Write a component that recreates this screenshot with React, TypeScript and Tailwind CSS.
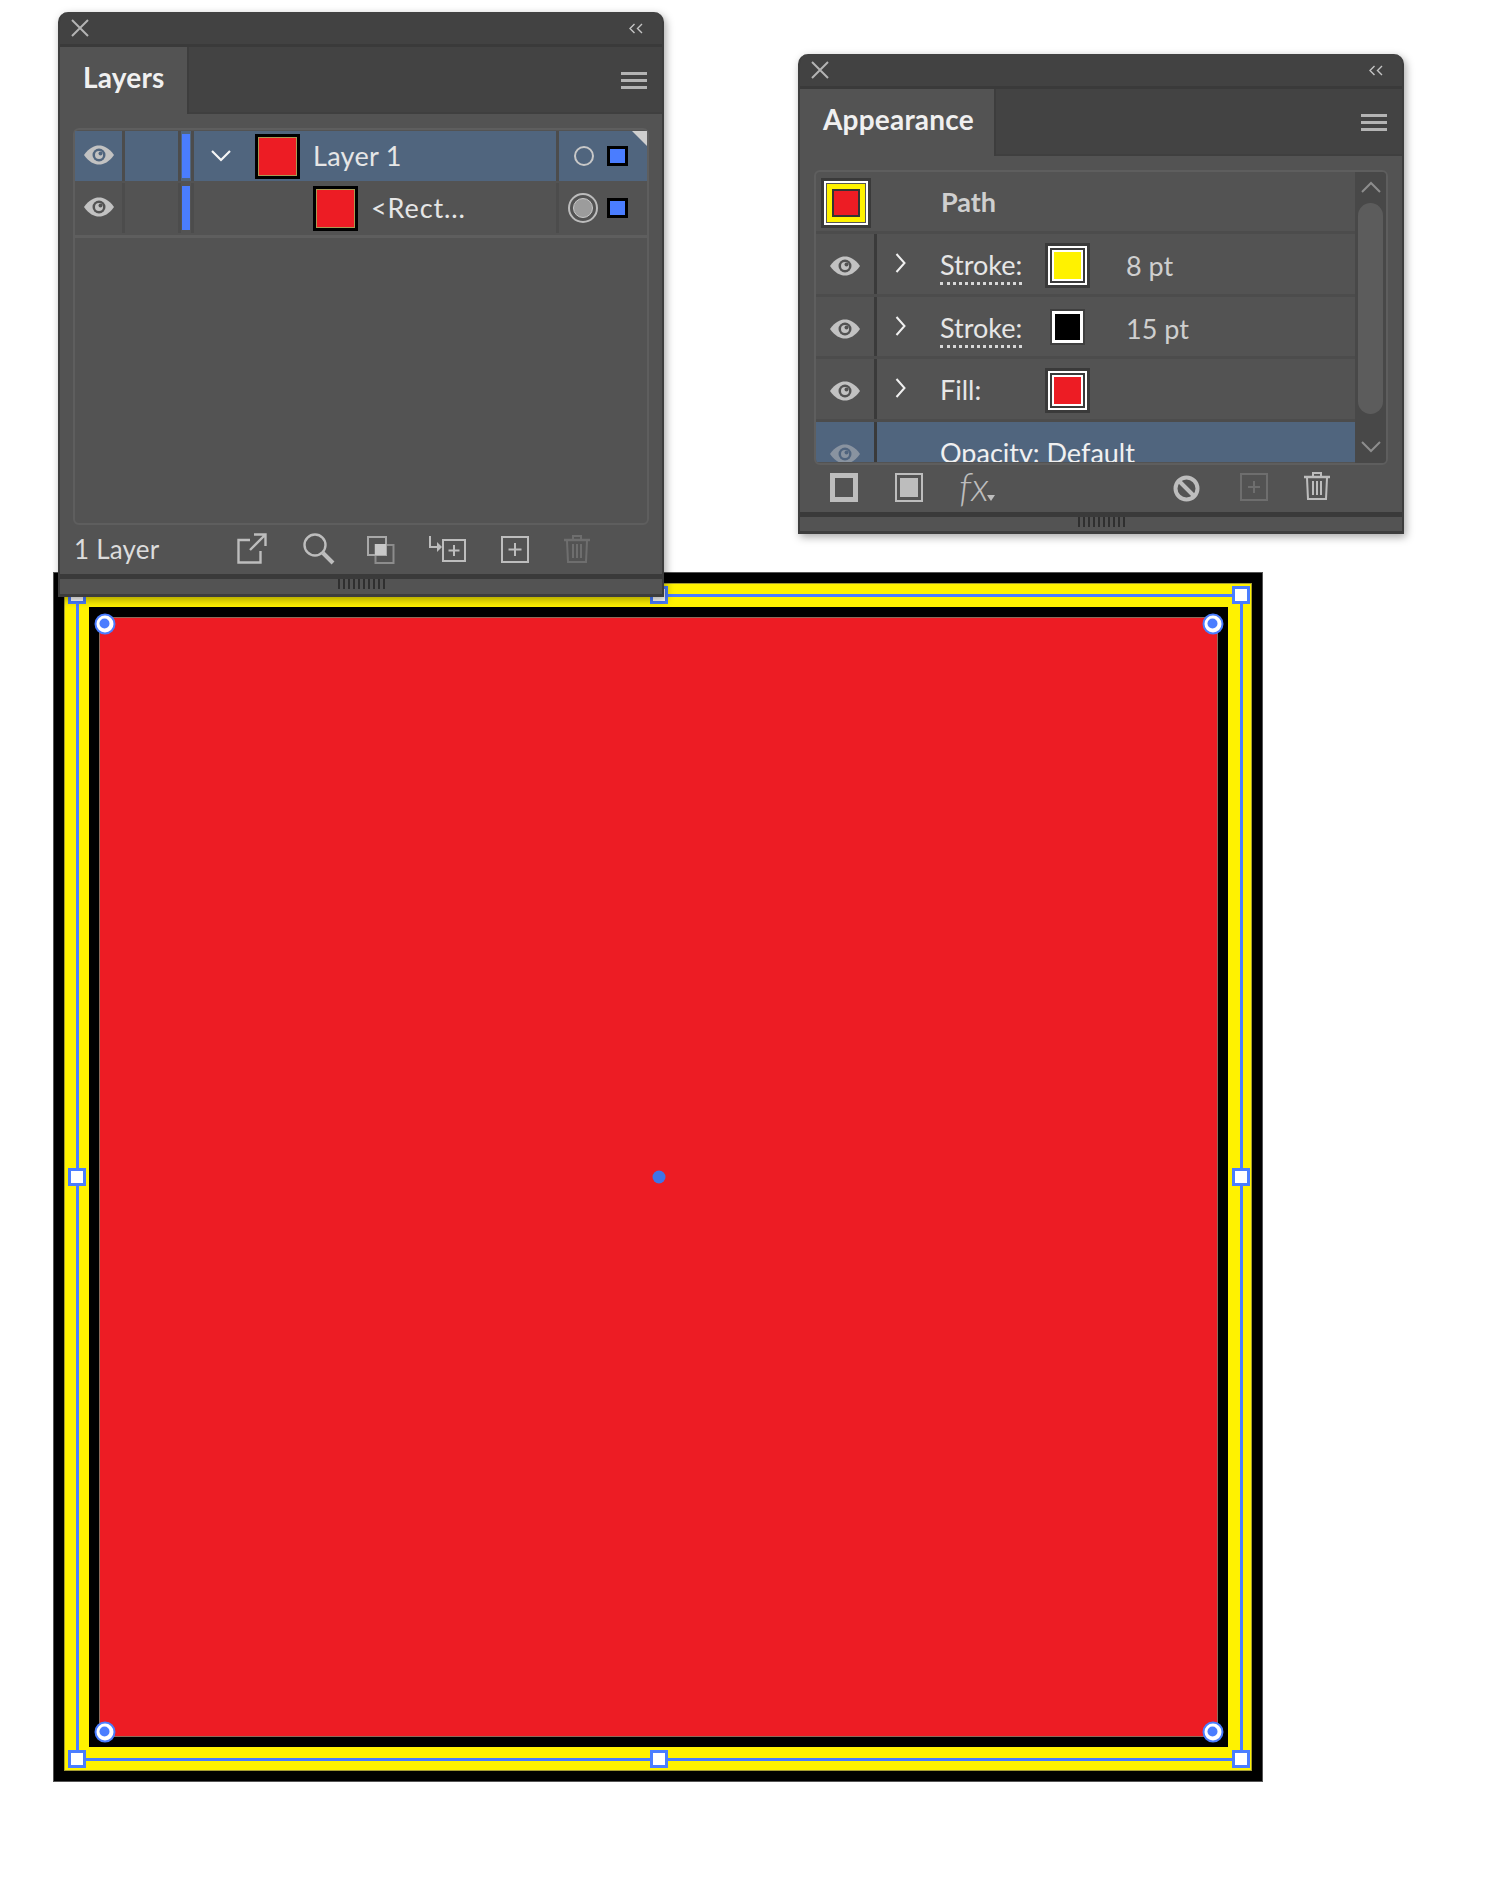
import type { ReactNode } from 'react';

const ICON = '#bdbdbd';

function CloseIcon() {
  return (
    <svg width="18" height="18" viewBox="0 0 18 18" fill="none" stroke="#b4b4b4" strokeWidth="2">
      <path d="M1 1 17 17M17 1 1 17" />
    </svg>
  );
}

function CollapseIcon() {
  return (
    <svg width="14" height="11" viewBox="0 0 14 11" fill="none" stroke="#c4c4c4" strokeWidth="1.4">
      <path d="M5.5 1 1 5.5 5.5 10M13 1 8.5 5.5 13 10" />
    </svg>
  );
}

function MenuIcon() {
  return (
    <div className="flex flex-col gap-[4px] w-[26px]">
      <div className="h-[3px] bg-[#b4b4b4]" />
      <div className="h-[3px] bg-[#b4b4b4]" />
      <div className="h-[3px] bg-[#b4b4b4]" />
    </div>
  );
}

function EyeIcon({ color = '#c2c2c2', pupil = '#535353' }: { color?: string; pupil?: string }) {
  return (
    <svg width="30" height="20" viewBox="0 0 30 20">
      <path d="M0 10C5 3 10 .5 15 .5S25 3 30 10C25 17 20 19.500 15 19.500S5 17 0 10Z" fill={color} />
      <circle cx="15" cy="10" r="6.500" fill={pupil} />
      <circle cx="15" cy="10" r="4" fill={color} />
      <circle cx="16.500" cy="8.500" r="2" fill={pupil} />
    </svg>
  );
}

function Chevron({ dir }: { dir: 'down' | 'right' | 'up' | 'downThin' }) {
  if (dir === 'right') {
    return (
      <svg width="11" height="20" viewBox="0 0 11 20" fill="none" stroke="#f0f0f0" strokeWidth="2">
        <path d="M1.500 1 9.500 10 1.500 19" />
      </svg>
    );
  }
  if (dir === 'down') {
    return (
      <svg width="20" height="12" viewBox="0 0 20 12" fill="none" stroke="#f5f5f5" strokeWidth="2.200">
        <path d="M1 1 10 10 19 1" />
      </svg>
    );
  }
  return (
    <svg width="20" height="12" viewBox="0 0 20 12" fill="none" stroke="#8d8d8d" strokeWidth="2">
      <path d={dir === 'up' ? 'M1 11 10 2 19 11' : 'M1 1 10 10 19 1'} />
    </svg>
  );
}

function Grip() {
  return (
    <div className="flex gap-[3px] h-[10px]">
      {Array.from({ length: 10 }).map((_, i) => (
        <div key={i} className="w-[2px] bg-[#2f2f2f]" />
      ))}
    </div>
  );
}

function PanelFrame({ title, tabWidth, className, children }: { title: string; tabWidth: string; className: string; children: ReactNode }) {
  return (
    <div className={`absolute flex flex-col rounded-t-[10px] bg-[#424242] border-x-2 border-b-[3px] border-[#3d3d3d] shadow-[2px_3px_8px_rgba(0,0,0,0.35)] ${className}`}>
      <div className="flex items-center justify-between h-[35px] pl-[11px] pr-[19px] shrink-0 rounded-t-[10px] border-b-[3px] border-[#3a3a3a]">
        <CloseIcon />
        <CollapseIcon />
      </div>
      <div className="flex items-stretch h-[67px] shrink-0 bg-[#434343] border-b-[2px] border-[#3f3f3f]">
        <div className={`flex items-center pl-[23px] pb-[7px] bg-[#535353] border-r-[2px] border-[#3d3d3d] -mb-[2px] ${tabWidth}`}>
          <span className="text-[28px] font-bold text-[#f0f0f0] tracking-[0.2px]">{title}</span>
        </div>
        <div className="flex-1 flex items-center justify-end pr-[15px] pt-[2px]">
          <MenuIcon />
        </div>
      </div>
      <div className="flex-1 flex flex-col bg-[#535353] min-h-0">{children}</div>
    </div>
  );
}

function Thumb({ ml }: { ml: string }) {
  return (
    <div className={`w-[45px] h-[45px] border-[3px] border-black bg-[#ed1c24] shadow-[inset_0_0_0_1px_#a89a55] shrink-0 ${ml}`} />
  );
}

function TargetSquare() {
  return <div className="w-[21px] h-[20px] bg-[#4a7dff] border-[3px] border-black" />;
}

interface LayerRowProps {
  selected?: boolean;
  children: ReactNode;
  target: ReactNode;
}

function LayerRow({ selected, children, target }: LayerRowProps) {
  return (
    <div className={`relative flex items-stretch h-[50px] mb-[2px] ${selected ? 'bg-[#50657e]' : 'bg-[#535353]'}`}>
      <div className="w-[50px] flex items-center justify-center pb-[3px] border-r-[3px] border-[#4c4c4c]">
        <EyeIcon pupil={selected ? '#50657e' : '#535353'} />
      </div>
      <div className="w-[56px] border-r-[3px] border-[#4c4c4c]" />
      <div className="w-[13px] flex items-center justify-center border-r-[3px] border-[#4c4c4c]">
        <div className="w-[8px] h-[44px] bg-[#4a7dff]" />
      </div>
      <div className="flex-1 flex items-center">{children}</div>
      <div className="w-[91px] relative flex items-center border-l-[3px] border-[#4c4c4c]">{target}</div>
    </div>
  );
}

function LayersFooterIcons() {
  const s = { fill: 'none', stroke: ICON, strokeWidth: 2.4 };
  return (
    <>
      <svg className="absolute left-[177px] top-[8px]" width="30" height="31" viewBox="0 0 30 31" {...s}>
        <path d="M13 7H1.500V29.500H23.500V18M17 1.500H28.500V13M28 2 13 17" />
      </svg>
      <svg className="absolute left-[243px] top-[8px]" width="32" height="32" viewBox="0 0 32 32" {...s}>
        <circle cx="12" cy="12" r="10.500" />
        <path d="M20 20 30 30" strokeWidth="4" />
      </svg>
      <svg className="absolute left-[307px] top-[11px]" width="28" height="28" viewBox="0 0 28 28" fill="none">
        <rect x="8.500" y="9" width="18" height="18" stroke="#8c8c8c" strokeWidth="2" />
        <rect x="1" y="1" width="18" height="18" stroke="#a8a8a8" strokeWidth="2" />
        <rect x="8" y="8" width="11" height="11" fill="#c8c8c8" />
      </svg>
      <svg className="absolute left-[368px] top-[11px]" width="38" height="26" viewBox="0 0 38 26" {...s} strokeWidth="2">
        <rect x="15" y="4" width="22" height="21" />
        <path d="M26 9V20M20.500 14.500H31.500" />
        <path d="M2 0V11H10" />
        <path d="M9 6V16L14 11Z" fill={ICON} stroke="none" />
      </svg>
      <svg className="absolute left-[441px] top-[11px]" width="28" height="27" viewBox="0 0 28 27" {...s} strokeWidth="2">
        <rect x="1" y="1" width="26" height="25" />
        <path d="M14 7V20M7.500 13.500H20.500" />
      </svg>
      <TrashIcon className="absolute left-[503px] top-[9px]" color="#6e6e6e" />
    </>
  );
}

function TrashIcon({ className, color }: { className: string; color: string }) {
  return (
    <svg className={className} width="28" height="29" viewBox="0 0 28 29" fill="none" stroke={color} strokeWidth="2">
      <path d="M1 6H27" strokeWidth="2.500" />
      <path d="M10 5V2H18V5" />
      <path d="M4 7 5 28H23L24 7" />
      <path d="M10 10V24M14 10V24M18 10V24" />
    </svg>
  );
}

function LayersPanel() {
  return (
    <PanelFrame title="Layers" tabWidth="w-[129px]" className="left-[58px] top-[12px] w-[606px] h-[585px]">
      <div className="mt-[14px] mx-[13px] h-[397px] rounded-[6px] border-[2px] border-[#5e5e5e] pt-[1px]">
        <LayerRow
          selected
          target={
            <>
              <div className="ml-[15px] w-[20px] h-[20px] rounded-full border-[2px] border-[#c8c8c8]" />
              <div className="ml-[13px]">
                <TargetSquare />
              </div>
              <div className="absolute right-0 top-0 w-0 h-0 border-t-[15px] border-l-[15px] border-t-[#cfcfcf] border-l-transparent" />
            </>
          }
        >
          <div className="ml-[17px]">
            <Chevron dir="down" />
          </div>
          <Thumb ml="ml-[24px]" />
          <span className="ml-[13px] text-[27px] text-[#e6e6e6] tracking-[0.3px]">Layer 1</span>
        </LayerRow>
        <LayerRow
          target={
            <>
              <div className="ml-[9px] w-[30px] h-[30px] rounded-full border-[2px] border-[#bcbcbc] flex items-center justify-center">
                <div className="w-[20px] h-[20px] rounded-full bg-[#9c9c9c] border-[1px] border-[#c8c8c8]" />
              </div>
              <div className="ml-[9px]">
                <TargetSquare />
              </div>
            </>
          }
        >
          <Thumb ml="ml-[119px]" />
          <span className="ml-[13px] text-[27px] text-[#e6e6e6] tracking-[0.9px]">&lt;Rect...</span>
        </LayerRow>
        <div className="h-[3px] bg-[#5e5e5e]" />
      </div>
      <div className="relative flex-1 flex items-center pl-[14px]">
        <span className="text-[26px] text-[#dcdcdc] tracking-[0.2px]">1 Layer</span>
        <LayersFooterIcons />
      </div>
      <div className="h-[5px] bg-[#3a3a3a]" />
      <div className="h-[15px] bg-[#535353] flex justify-center">
        <Grip />
      </div>
    </PanelFrame>
  );
}

function Swatch({ color, thick }: { color: string; thick?: boolean }) {
  if (thick) {
    return (
      <div className="w-[35px] h-[36px] border-[2px] border-[#3f3f3f] bg-white p-[3px] mx-[5px] mt-[3px]">
        <div className="w-full h-full" style={{ background: color }} />
      </div>
    );
  }
  return (
    <div className="w-[45px] h-[45px] border-[3px] border-[#3a3a3a] bg-white p-[2px]">
      <div className="w-full h-full border-[2px] border-[#3a3a3a] bg-white p-[2px]">
        <div className="w-full h-full" style={{ background: color }} />
      </div>
    </div>
  );
}

function AppearanceRow({ label, dotted, swatch, value, expandable = true, selected }: { label: ReactNode; dotted?: boolean; swatch?: ReactNode; value?: string; expandable?: boolean; selected?: boolean }) {
  return (
    <div className={`flex items-stretch shrink-0 overflow-hidden ${selected ? 'h-[40px] bg-[#50657e]' : 'h-[62.5px] border-b-[3px] border-[#4c4c4c]'}`}>
      <div className="w-[58px] flex pt-[22px] justify-center">
        <div className={selected ? 'opacity-50' : ''}>
          <EyeIcon pupil={selected ? '#50657e' : '#535353'} />
        </div>
      </div>
      <div className="w-[3px] bg-[#3a3a3a]" />
      <div className="w-[63px] pl-[18px] pt-[19px]">{expandable && <Chevron dir="right" />}</div>
      <div className={`w-[105px] pt-[13px] text-[27px] leading-[36px] shrink-0 ${selected ? 'text-[#f0f0f0] whitespace-nowrap' : 'text-[#e6e6e6]'}`}>
        <span className={dotted ? 'pb-[1px] border-b-[3px] border-dotted border-[#d8d8d8]' : ''}>{label}</span>
      </div>
      <div className="w-[81px] pt-[9px]">{swatch}</div>
      {value && <div className="pt-[14px] text-[27px] leading-[36px] text-[#cfcfcf]">{value}</div>}
    </div>
  );
}

function AppearanceFooterIcons() {
  return (
    <>
      <svg className="absolute left-[30px] top-[8px]" width="28" height="29" viewBox="0 0 28 29" fill="none" stroke={ICON} strokeWidth="5">
        <rect x="2.500" y="2.500" width="23" height="24" />
      </svg>
      <svg className="absolute left-[95px] top-[8px]" width="28" height="29" viewBox="0 0 28 29">
        <rect x="1" y="1" width="26" height="27" fill="none" stroke={ICON} strokeWidth="2" />
        <rect x="5" y="5" width="18" height="19" fill={ICON} />
      </svg>
      <span className="absolute left-[159px] top-[0px] italic font-light text-[40px] leading-[42px] text-[#bdbdbd]">fx</span>
      <svg className="absolute left-[187px] top-[30px]" width="8" height="6" viewBox="0 0 8 6">
        <path d="M0 0H8L4 6Z" fill={ICON} />
      </svg>
      <svg className="absolute left-[373px] top-[10px]" width="27" height="27" viewBox="0 0 27 27" fill="none" stroke={ICON} strokeWidth="4">
        <circle cx="13.500" cy="13.500" r="11" />
        <path d="M6 6 21 21" />
      </svg>
      <svg className="absolute left-[440px] top-[8px]" width="28" height="28" viewBox="0 0 28 28" fill="none" stroke="#6e6e6e" strokeWidth="2">
        <rect x="1" y="1" width="26" height="26" />
        <path d="M14 8V20M8 14H20" />
      </svg>
      <TrashIcon className="absolute left-[503px] top-[6px]" color={ICON} />
    </>
  );
}

function AppearancePanel() {
  return (
    <PanelFrame title="Appearance" tabWidth="w-[196px]" className="left-[798px] top-[54px] w-[606px] h-[480px]">
      <div className="mt-[14px] mx-[14px] h-[295px] rounded-[6px] border-[2px] border-[#5e5e5e] flex overflow-hidden">
        <div className="flex-1 flex flex-col min-w-0">
          <div className="h-[62px] shrink-0 flex items-center border-b-[3px] border-[#4c4c4c] pt-[2px]">
            <div className="ml-[5px] w-[50px] h-[50px] border-[3px] border-[#3a3a3a] bg-white p-[2px]">
              <div className="w-full h-full bg-[#fff200] border-[1px] border-[#555] p-[5px]">
                <div className="w-full h-full bg-[#ed1c24] border-[2px] border-[#333]" />
              </div>
            </div>
            <span className="ml-[70px] text-[27px] font-bold text-[#cfcfcf]">Path</span>
          </div>
          <AppearanceRow label="Stroke:" dotted swatch={<Swatch color="#fff200" />} value="8 pt" />
          <AppearanceRow label="Stroke:" dotted swatch={<Swatch color="#000000" thick />} value="15 pt" />
          <AppearanceRow label="Fill:" swatch={<Swatch color="#ed1c24" />} />
          <AppearanceRow label="Opacity: Default" expandable={false} selected />
        </div>
        <div className="w-[31px] shrink-0 bg-[#484848] flex flex-col items-center pt-[9px]">
          <Chevron dir="up" />
          <div className="mt-[10px] w-[25px] h-[211px] rounded-full bg-[#5c5c5c]" />
          <div className="mt-[27px]">
            <Chevron dir="downThin" />
          </div>
        </div>
      </div>
      <div className="relative flex-1">
        <AppearanceFooterIcons />
      </div>
      <div className="h-[5px] bg-[#3a3a3a]" />
      <div className="h-[14px] bg-[#535353] flex justify-center">
        <Grip />
      </div>
    </PanelFrame>
  );
}

function Handle({ className }: { className: string }) {
  return <div className={`absolute w-[18px] h-[18px] -translate-x-1/2 -translate-y-1/2 bg-white border-[3px] border-[#4a7dff] ${className}`} />;
}

function CornerWidget({ className }: { className: string }) {
  return (
    <div className={`absolute w-[21px] h-[21px] -translate-x-1/2 -translate-y-1/2 rounded-full bg-white border-[2px] border-[#4a7dff] flex items-center justify-center ${className}`}>
      <div className="w-[10px] h-[10px] rounded-full bg-[#4a7dff]" />
    </div>
  );
}

function Artwork() {
  return (
    <div className="relative w-[1210px] h-[1210px] bg-black p-[11px] ml-[53px] shadow-[inset_0_0_0_1px_#555]">
      <div className="w-full h-full bg-[#fff200] py-[24px] pl-[25px] pr-[24px] shadow-[inset_0_0_0_1px_#a59c30]">
        <div className="w-full h-full bg-black p-[10px]">
          <div className="w-full h-full bg-[#ed1c24] shadow-[inset_0_0_0_1px_#8f6a5a]" />
        </div>
      </div>
      <div className="absolute left-[22.5px] top-[21.5px] w-[1167px] h-[1167px] border-[3px] border-[#4a7dff]">
        <Handle className="left-[-1.5px] top-[-1.5px]" />
        <Handle className="left-1/2 top-[-1.5px]" />
        <Handle className="left-[calc(100%+1.5px)] top-[-1.5px]" />
        <Handle className="left-[-1.5px] top-1/2" />
        <Handle className="left-[calc(100%+1.5px)] top-1/2" />
        <Handle className="left-[-1.5px] top-[calc(100%+1.5px)]" />
        <Handle className="left-1/2 top-[calc(100%+1.5px)]" />
        <Handle className="left-[calc(100%+1.5px)] top-[calc(100%+1.5px)]" />
        <CornerWidget className="left-[26px] top-[27px]" />
        <CornerWidget className="left-[1134px] top-[27px]" />
        <CornerWidget className="left-[26px] top-[1135px]" />
        <CornerWidget className="left-[1134px] top-[1135px]" />
        <div className="absolute left-1/2 top-1/2 w-[13px] h-[13px] -translate-x-1/2 -translate-y-1/2 rounded-full bg-[#3f74e8]" />
      </div>
    </div>
  );
}

export default function App() {
  return (
    <div className="relative w-[1502px] h-[1880px] bg-white pt-[572px] overflow-hidden font-[Lato,sans-serif]">
      <Artwork />
      <LayersPanel />
      <AppearancePanel />
    </div>
  );
}
